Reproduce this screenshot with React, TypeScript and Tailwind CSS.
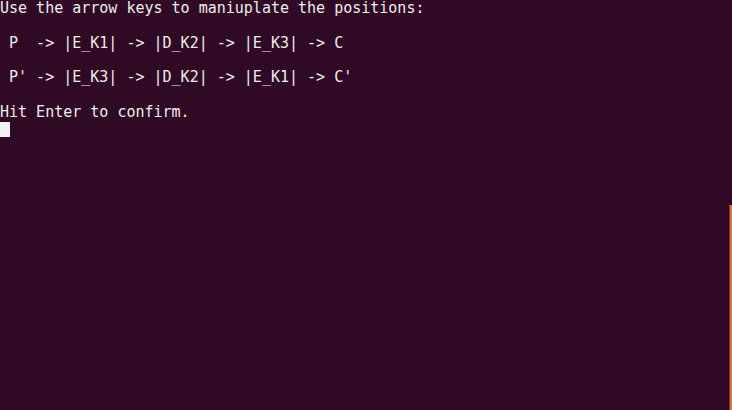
import React from "react";

const lines: string[] = [
  "Use the arrow keys to maniuplate the positions:",
  "",
  " P  -> |E_K1| -> |D_K2| -> |E_K3| -> C",
  "",
  " P' -> |E_K3| -> |D_K2| -> |E_K1| -> C'",
  "",
  "Hit Enter to confirm.",
];

export default function App() {
  return (
    <div className="relative w-[732px] h-[410px] overflow-hidden bg-[#300a24] text-[#eeeeec] font-['DejaVu_Sans_Mono',monospace] text-[15px] leading-[17.3px]">
      <div className="flex flex-col">
        {lines.map((line, i) => (
          <div key={i} className="h-[17.3px] whitespace-pre">
            {line}
          </div>
        ))}
        <div className="h-[17.3px] flex items-start">
          <span className="block w-[10px] h-[15px] mt-[1px] bg-[#f2f2f2]" />
        </div>
      </div>

      {/* scrollbar thumb */}
      <div className="absolute right-0 top-[205px] bottom-0 w-[3px] border-l border-[#7a3a2e] bg-[#d9734f]" />
    </div>
  );
}
